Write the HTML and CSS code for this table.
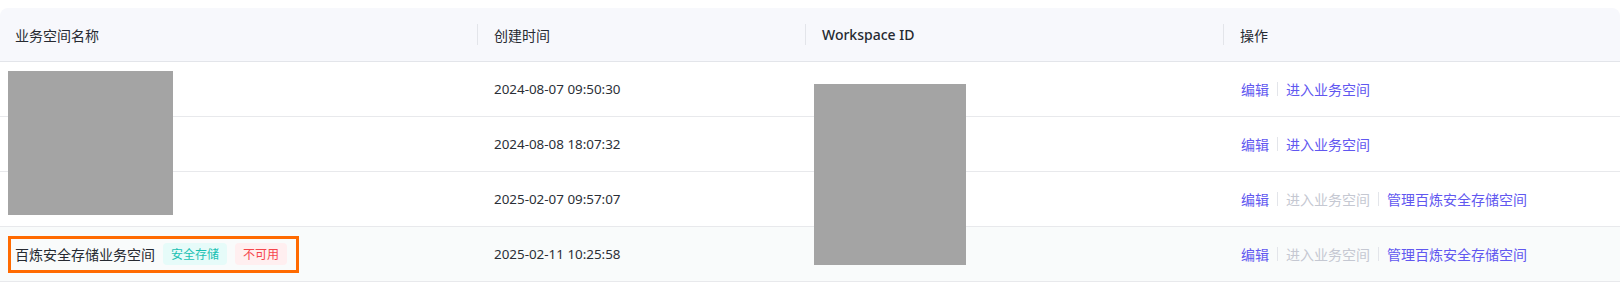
FILE: index.html
```html
<!DOCTYPE html>
<html lang="zh-CN">
<head>
<meta charset="utf-8">
<title>业务空间</title>
<link rel="stylesheet" href="styles.css">
</head>
<body>
<div class="table">
  <div class="thead">
    <div class="th">业务空间名称</div>
    <div class="th sep">创建时间</div>
    <div class="th sep latin">Workspace ID</div>
    <div class="th sep">操作</div>
  </div>
  <div class="tr">
    <div class="td"></div>
    <div class="td date">2024-08-07 09:50:30</div>
    <div class="td"></div>
    <div class="td ops"><a class="link">编辑</a><span class="bar"></span><a class="link">进入业务空间</a></div>
  </div>
  <div class="tr">
    <div class="td"></div>
    <div class="td date">2024-08-08 18:07:32</div>
    <div class="td"></div>
    <div class="td ops"><a class="link">编辑</a><span class="bar"></span><a class="link">进入业务空间</a></div>
  </div>
  <div class="tr">
    <div class="td"></div>
    <div class="td date">2025-02-07 09:57:07</div>
    <div class="td"></div>
    <div class="td ops"><a class="link">编辑</a><span class="bar"></span><a class="link disabled">进入业务空间</a><span class="bar"></span><a class="link">管理百炼安全存储空间</a></div>
  </div>
  <div class="tr hover">
    <div class="td first">
      <div class="mark">
        <span class="name">百炼安全存储业务空间</span>
        <span class="tag cyan">安全存储</span>
        <span class="tag red">不可用</span>
      </div>
    </div>
    <div class="td date">2025-02-11 10:25:58</div>
    <div class="td"></div>
    <div class="td ops"><a class="link">编辑</a><span class="bar"></span><a class="link disabled">进入业务空间</a><span class="bar"></span><a class="link">管理百炼安全存储空间</a></div>
  </div>
  <div class="redact r1"></div>
  <div class="redact r2"></div>
</div>
</body>
</html>
```

FILE: styles.css
```css
html, body { background: #ffffff; }
body {
  margin: 8px 3px 0 0;
  font-family: "Noto Sans", "Noto Sans CJK SC", sans-serif;
  font-size: 14px;
  color: #262a31;
}
.table {
  position: relative;
  width: 1620px;
}
.thead, .tr {
  display: grid;
  grid-template-columns: 477px 328px 418px 397px;
}
.thead {
  height: 54px;
  box-sizing: border-box;
  background: #f7f8fc;
  border-bottom: 1px solid #e3e5ea;
  border-radius: 8px 8px 0 0;
}
.th {
  display: flex;
  align-items: center;
  padding-left: 15px;
  color: #262a31;
  position: relative;
}
.th.sep { padding-left: 17px; }
.th.sep::before {
  content: "";
  position: absolute;
  left: 0;
  top: 16px;
  width: 1px;
  height: 21px;
  background: #e3e5ea;
}
.th.latin { font-weight: 500; }
.tr {
  height: 55px;
  box-sizing: border-box;
  border-bottom: 1px solid #e8e9ec;
}
.tr.hover { background: #f9fbfb; }
.td {
  display: flex;
  align-items: center;
  padding-left: 17px;
}
.td.first { padding-left: 8px; }
.date { color: #2b2f37; font-size: 13.4px; }
.ops { padding-left: 18px; }
.link {
  color: #6157f0;
  cursor: pointer;
}
.link.disabled { color: #c5c8d2; }
.bar {
  display: inline-block;
  width: 1px;
  height: 14px;
  background: #e3e5ea;
  margin: 0 8px;
}
.mark {
  display: flex;
  align-items: center;
  height: 37px;
  box-sizing: border-box;
  border: 3px solid #ff6a00;
  padding: 0 9px 0 4px;
  width: 291px;
}
.name { margin-right: 8px; }
.tag {
  display: inline-flex;
  align-items: center;
  height: 22px;
  padding: 0 8px;
  border-radius: 4px;
  font-size: 12px;
  margin-right: 8px;
}
.tag:last-child { margin-right: 0; }
.tag.cyan { background: #e6fbf9; color: #18c0b2; }
.tag.red { background: #ffeff0; color: #f5454b; }
.redact {
  position: absolute;
  background: #a4a4a4;
}
.r1 { left: 8px; top: 63px; width: 165px; height: 144px; }
.r2 { left: 814px; top: 76px; width: 152px; height: 181px; }
```
